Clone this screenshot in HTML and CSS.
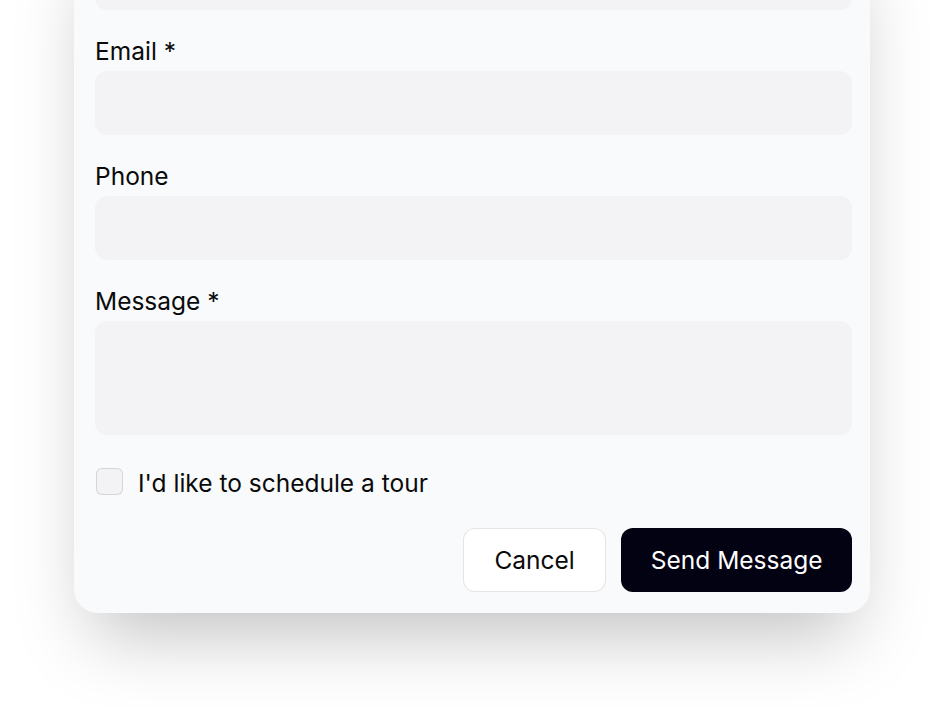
FILE: index.html
```html
<!DOCTYPE html>
<html lang="en">
<head>
    <meta charset="UTF-8">
    <meta name="viewport" content="width=device-width, initial-scale=1.0">
    <title>Contact</title>
    <link rel="stylesheet" href="styles.css">
</head>
<body>
    <div class="card">
        <form class="form">
            <div class="field">
                <input class="input" id="name" type="text" aria-label="Name">
            </div>
            <div class="field">
                <label for="email">Email *</label>
                <input class="input" id="email" type="email">
            </div>
            <div class="field">
                <label for="phone">Phone</label>
                <input class="input" id="phone" type="tel">
            </div>
            <div class="field">
                <label for="message">Message *</label>
                <textarea class="input textarea" id="message"></textarea>
            </div>
            <div class="check">
                <input class="checkbox" id="tour" type="checkbox">
                <label for="tour">I'd like to schedule a tour</label>
            </div>
            <div class="actions">
                <button class="btn btn-outline" type="button">Cancel</button>
                <button class="btn btn-primary" type="submit">Send Message</button>
            </div>
        </form>
    </div>
</body>
</html>
```

FILE: styles.css
```css
* {
    margin: 0;
    padding: 0;
    box-sizing: border-box;
}
body {
    background-color: #fff;
    font-family: "Inter", "Liberation Sans", sans-serif;
    color: #0a0a0a;
    padding-bottom: 120px;
}
.card {
    width: 796px;
    margin: -75px auto 0;
    padding: 21px 18px 21px 21px;
    background-color: #f9fafb;
    border-radius: 24px;
    box-shadow: 0 38px 75px -18px rgba(0, 0, 0, 0.25);
}
.form {
    display: flex;
    flex-direction: column;
    gap: 26px;
}
.field {
    display: flex;
    flex-direction: column;
    gap: 5px;
}
label {
    font-size: 24.5px;
    line-height: 30px;
    font-weight: 400;
}
.input {
    width: 100%;
    height: 64px;
    border: none;
    border-radius: 12px;
    background-color: #f3f3f5;
    font: inherit;
    font-size: 24px;
    padding: 0 18px;
    outline: none;
}
.textarea {
    height: 114px;
    resize: none;
    padding: 12px 18px;
}
.check {
    display: flex;
    align-items: flex-start;
    gap: 15px;
    margin-top: 7px;
}
.checkbox {
    appearance: none;
    width: 27px;
    height: 27px;
    margin-left: 1px;
    border: 1.5px solid rgba(0, 0, 0, 0.12);
    border-radius: 6px;
    background-color: #f3f3f5;
}
.check label {
    line-height: 36px;
    margin-top: -3px;
}
.actions {
    display: flex;
    justify-content: flex-end;
    gap: 15px;
    margin-top: 1px;
}
.btn {
    height: 64px;
    border-radius: 12px;
    font-family: inherit;
    font-size: 24.5px;
    font-weight: 400;
}
.btn-outline {
    padding: 0 30.5px;
    background-color: #fff;
    border: 1.5px solid rgba(0, 0, 0, 0.1);
    color: #0a0a0a;
}
.btn-primary {
    padding: 0 29.5px;
    background-color: #030213;
    border: none;
    color: #fff;
}
```
